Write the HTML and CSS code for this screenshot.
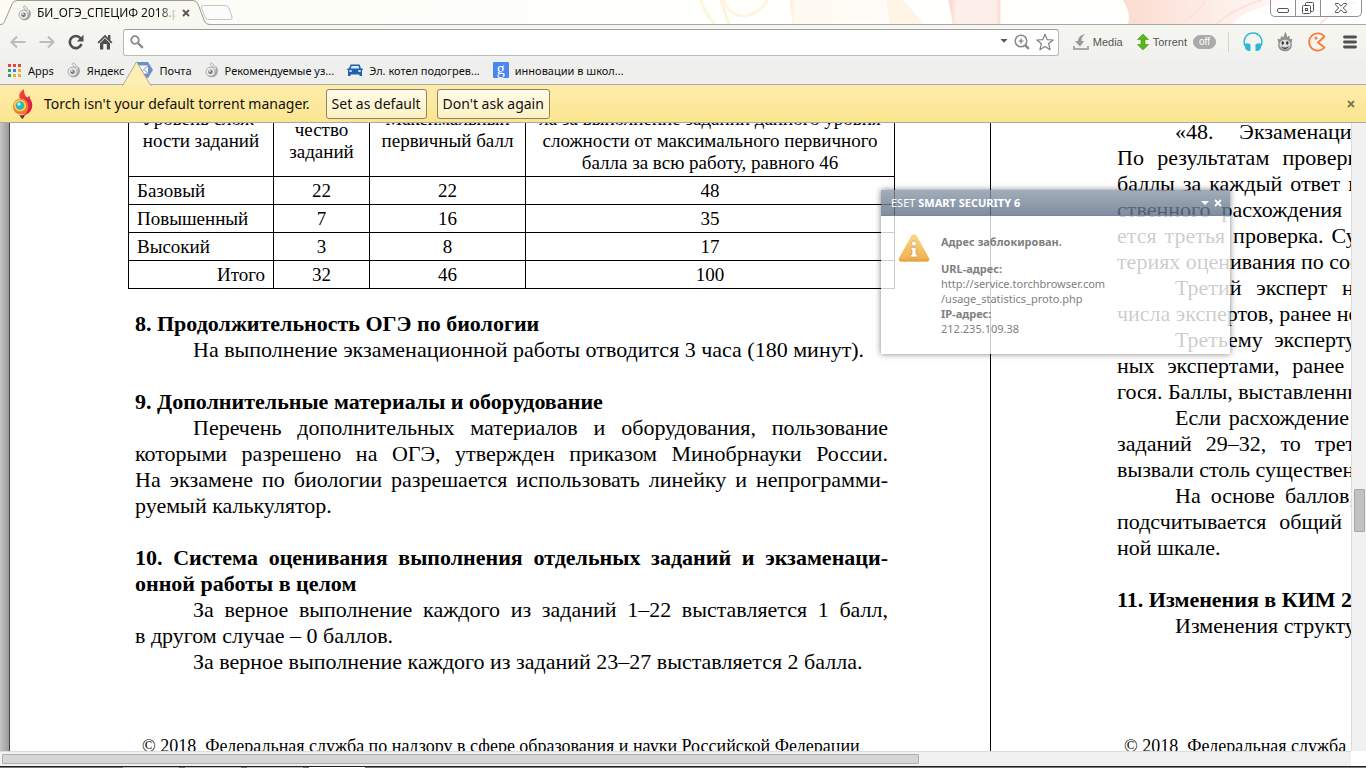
FILE: index.html
```html
<!DOCTYPE html>
<html lang="ru">
<head>
<meta charset="utf-8">
<title>БИ_ОГЭ_СПЕЦИФ 2018.pdf</title>
<link rel="stylesheet" href="styles.css">
</head>
<body>
<svg class="defs" width="0" height="0" aria-hidden="true">
  <defs>
    <linearGradient id="gFlame" x1="0" y1="0" x2="1" y2="1"><stop offset="0" stop-color="#ff4a3c"/><stop offset="1" stop-color="#c81640"/></linearGradient>
    <linearGradient id="gWarn" x1="0" y1="0" x2="0" y2="1"><stop offset="0" stop-color="#fbd880"/><stop offset="1" stop-color="#f1ad4e"/></linearGradient>
    <symbol id="torch" viewBox="0 0 14 16">
      <path d="M6 .8C3.600 3.400 7.500 4 8.800 6c1.600-1.600 0-4.600-2.800-5.200z" fill="#e4e4e4" stroke="#aaa" stroke-width=".8"/>
      <path d="M10.500 3.800c3.300 2.900 3.200 7.400.2 10.200-2.400 2-6.300 1.700-8.400-.4 3.400 1.200 7-.3 7.900-3.400.6-2.200.3-4.200.3-6.400z" fill="#a5a5a5"/>
      <circle cx="5.500" cy="9.700" r="4.500" fill="#f0f0f0" stroke="#a6a6a6"/>
      <circle cx="5.500" cy="9.800" r="2.400" fill="#808080"/>
      <circle cx="4.800" cy="9" r="1.100" fill="#ddd"/>
    </symbol>
  </defs>
</svg>
<div class="browser">
  <header class="tabstrip">
    <svg class="theme" viewBox="0 0 700 25" preserveAspectRatio="none" aria-hidden="true">
      <defs>
        <linearGradient id="t1"><stop offset="0" stop-color="#fdf0d8"/><stop offset=".1" stop-color="#fefaf2"/><stop offset=".8" stop-color="#fffbf5"/><stop offset="1" stop-color="#fffdfa"/></linearGradient>
        <linearGradient id="t2"><stop offset="0" stop-color="#fbd3c4"/><stop offset=".15" stop-color="#fdefea"/><stop offset=".9" stop-color="#fdeeea"/><stop offset="1" stop-color="#fbdcd2"/></linearGradient>
        <linearGradient id="t3"><stop offset="0" stop-color="#fcdcd0"/><stop offset=".5" stop-color="#fdf0ea"/><stop offset="1" stop-color="#fff"/></linearGradient>
      </defs>
      <path d="M32 0q4 14 14 25M55 0c8 22 30 22 44 0M52 0l8 25" fill="none" stroke="#fef5de" stroke-width="3"/>
      <path d="M121 0h62l7 25h-66z" fill="url(#t1)"/>
      <path d="M183 0h50q8 13 24 25h-67z" fill="#fffcf7"/>
      <path d="M218 0h18l20 25h-34z" fill="#fff5e6"/>
      <path d="M281 0h52v25h-48z" fill="url(#t2)"/>
      <path d="M456 0h210q-80 0-100 25h-105q4-10-5-25z" fill="url(#t3)"/>
      <path d="M540 0q-8 12-25 25M596 0q-28 8-46 25M690 2q-20 6-36 23" fill="none" stroke="#fce3da" stroke-width="2"/>
    </svg>
    <div class="tab">
      <svg class="tab-shape" viewBox="0 0 212 25" aria-hidden="true"><path d="M0 24.500c3 0 4-1 5-4L12 4Q13.500.5 17 .5H193q3.500 0 5 3.500l6 16q1.500 4.500 6 4.500v1H0z" fill="#f8f8f1"/><path d="M0 24.500c3 0 4-1 5-4L12 4Q13.500.5 17 .5H193q3.500 0 5 3.500l6 16q1.500 4.500 6 4.500" fill="none" stroke="#9b9b9b"/></svg>
      <svg class="i16" aria-hidden="true"><use href="#torch"/></svg>
      <span class="tab-title">БИ_ОГЭ_СПЕЦИФ 2018.pdf</span>
      <button class="tab-close" aria-label="Закрыть вкладку"><svg width="8" height="8" viewBox="0 0 8 8"><path d="M1 1l6 6M7 1L1 7" stroke="#555" stroke-width="1.800"/></svg></button>
    </div>
    <button class="newtab" aria-label="Новая вкладка"><svg width="34" height="17" viewBox="0 0 34 17"><path d="M3 1.500h22q3 0 4 2.500l3 9q.8 2.500-2 2.500H9q-3 0-4-2.500L1.500 4q-.8-2.500 1.500-2.500z" fill="#fcfcfc" stroke="#c4c4c4"/></svg></button>
    <div class="winctl">
      <button aria-label="Свернуть"><svg width="24" height="16" viewBox="0 0 24 16"><rect x="6.500" y="8.500" width="11" height="4" rx="1.500" fill="#fff" stroke="#555"/></svg></button>
      <button aria-label="Развернуть"><svg width="24" height="16" viewBox="0 0 24 16"><rect x="9.500" y="2.500" width="8" height="9" rx="1" fill="#fff" stroke="#555"/><rect x="6.500" y="5.500" width="8" height="8" rx="1" fill="#fff" stroke="#555"/><rect x="9.500" y="8.500" width="2" height="2" fill="none" stroke="#555"/></svg></button>
      <button class="wide" aria-label="Закрыть"><svg width="40" height="16" viewBox="0 0 40 16"><path d="M14.500 3.500h3l2.500 2.800 2.500-2.800h3v1.200L22.300 8l3.200 3.300v1.200h-3L20 9.700l-2.500 2.800h-3v-1.200L17.700 8l-3.200-3.300z" fill="#fff" stroke="#555"/></svg></button>
    </div>
  </header>

  <div class="toolbar">
    <nav class="nav">
      <button aria-label="Назад"><svg width="16" height="14" viewBox="0 0 16 14"><path d="M7 1.500L1.500 7 7 12.500M2 7h13.500" fill="none" stroke="#bdbdbd" stroke-width="2.200"/></svg></button>
      <button aria-label="Вперёд"><svg width="16" height="14" viewBox="0 0 16 14"><path d="M9 1.500L14.500 7 9 12.500M14 7H.5" fill="none" stroke="#bdbdbd" stroke-width="2.200"/></svg></button>
      <button aria-label="Обновить"><svg width="16" height="16" viewBox="0 0 16 16"><path d="M12.500 4.300A6 6 0 1 0 13.500 10" fill="none" stroke="#4f4f4f" stroke-width="2.600"/><path d="M15.500.8v6.700H8.800z" fill="#4f4f4f"/></svg></button>
      <button aria-label="Домой"><svg width="16" height="16" viewBox="0 0 16 16"><path d="M8 .8L.6 8.200l1.200 1.200L8 3.200l6.200 6.200 1.200-1.200-2-2V1h-2.400v2.800z" fill="#4f4f4f"/><path d="M3 9.200l5-5 5 5V15.500H9.800V10H6.300v5.500H3z" fill="#4f4f4f"/></svg></button>
    </nav>
    <div class="omnibox">
      <svg width="14" height="14" viewBox="0 0 14 14" aria-hidden="true"><circle cx="5" cy="5" r="3.800" fill="none" stroke="#8a8a8a" stroke-width="1.800"/><path d="M7.800 7.800l5 5" stroke="#8a8a8a" stroke-width="2.400"/></svg>
      <input type="text" aria-label="Адресная строка">
      <button aria-label="История"><svg width="8" height="8" viewBox="0 0 8 8"><path d="M.5 1h7L4 4.800z" fill="#555"/></svg></button>
      <button aria-label="Масштаб"><svg width="16" height="16" viewBox="0 0 16 16"><circle cx="7" cy="7" r="5.800" fill="none" stroke="#8a8a8a" stroke-width="1.500"/><path d="M11.200 11.200l3.600 3.600" stroke="#8a8a8a" stroke-width="2.400"/><path d="M7 4.500v5M4.500 7h5" stroke="#777" stroke-width="1.200"/></svg></button>
      <button aria-label="Добавить закладку"><svg width="18" height="18" viewBox="0 0 18 18"><path d="M9 1.200l2.200 5.400 5.900.4-4.500 3.800 1.500 5.900L9 13.500l-5.100 3.200 1.500-5.900L.9 7l5.900-.4z" fill="#fff" stroke="#808080" stroke-width="1.200" stroke-linejoin="round"/></svg></button>
    </div>
    <div class="exts">
      <button class="ext"><svg width="16" height="16" viewBox="0 0 16 16"><path d="M12.500 0C7 1 5 4 5.200 7H2l5 5.500L11.200 7H8.500c-.3-2.500 1-5 4-7z" fill="#999"/><path d="M1 12v3h14v-3" fill="none" stroke="#aaa" stroke-width="2"/></svg><span>Media</span></button>
      <button class="ext torrent"><svg width="12" height="16" viewBox="0 0 12 16"><path d="M6 0l5.500 5.500H8v5h3.500L6 16 .5 10.500H4v-5H.5z" fill="#58b81e" stroke="#3f9412" stroke-width=".6"/></svg><span>Torrent</span><span class="off">off</span></button>
      <span class="sep"></span>
      <button aria-label="Музыка"><svg width="20" height="20" viewBox="0 0 20 20"><path d="M2 14C-.8 7.500 3.500 1 10 1s10.800 6.500 8 13" fill="none" stroke="#2bb9d4" stroke-width="1.500"/><path d="M2 12q2.500-1.500 5.500.5V19q-4 .5-5.500-3zM18 12q-2.500-1.500-5.500.5V19q4 .5 5.500-3z" fill="#2bb9d4"/></svg></button>
      <button aria-label="Hola"><svg width="16" height="20" viewBox="0 0 16 20"><path d="M1 7l2.500 1 1-3.500L6.500 6 8.500.5l1.500 5.500L12 4l.5 4L15 7l-.8 3.500q1.500 8-6.200 8.500-7.700-.5-6.200-8.500z" fill="#929292" stroke="#777" stroke-width=".6"/><ellipse cx="8" cy="12.500" rx="5.500" ry="4.800" fill="#dedede"/><ellipse cx="5.700" cy="11" rx="1.200" ry="1.700" fill="#333"/><ellipse cx="10.300" cy="11" rx="1.200" ry="1.700" fill="#333"/><path d="M4 14q4 3 8 0-1 3-4 3t-4-3z" fill="#444"/></svg></button>
      <button aria-label="Игры"><svg width="20" height="20" viewBox="0 0 20 20"><path d="M17.500 4.500A8.700 8.700 0 1 0 17.500 15.500L11 10.500z" fill="none" stroke="#ff7830" stroke-width="1.800" stroke-linejoin="round"/><circle cx="9" cy="6" r="1.500" fill="#ff7830"/></svg></button>
      <button aria-label="Меню"><svg width="14" height="14" viewBox="0 0 14 14"><path d="M1.500 2h11M1.500 7h11M1.500 12h11" stroke="#505050" stroke-width="2.800" stroke-linecap="round"/></svg></button>
    </div>
  </div>

  <nav class="bookmarks">
    <a href="#"><svg width="14" height="13" viewBox="0 0 14 13"><path d="M0 0h3v3H0zM5 0h3v3H5zM10 0h3v3h-3z" fill="#e8453c"/><path d="M0 5h3v3H0z" fill="#2fa35a"/><path d="M5 5h3v3H5z" fill="#3b7df0"/><path d="M10 5h3v3h-3zM5 10h3v3H5zM10 10h3v3h-3z" fill="#f5ae1c"/><path d="M0 10h3v3H0z" fill="#2fa35a"/></svg>Apps</a>
    <a href="#"><svg class="i16" aria-hidden="true"><use href="#torch"/></svg>Яндекс</a>
    <a href="#" class="mail"><svg width="16" height="16" viewBox="0 0 16 16"><path d="M0 0h11l5 8-5 8H0z" fill="#6f8fc9"/><path d="M0 3.500h11v8H0z" fill="#fff"/><path d="M0 4l5.500 4.500L11 4M0 11.500l4-4M11 11.500l-4-4" fill="none" stroke="#6f8fc9"/></svg>Почта</a>
    <a href="#"><svg class="i16" aria-hidden="true"><use href="#torch"/></svg>Рекомендуемые уз...</a>
    <a href="#"><svg width="16" height="16" viewBox="0 0 16 16"><path d="M3.500 2.500h9l1.500 4h1.800v1.500H15v6h-2.500V12.500h-9V14H1V8H.2V6.500H2z" fill="#1c62ad"/><path d="M4.500 4h7l.8 2.500H3.700z" fill="#dceaf7"/><path d="M2.300 8.300h2.500v1.500H2.300zM11.200 8.300h2.500v1.500h-2.500z" fill="#fff"/></svg>Эл. котел подогрев...</a>
    <a href="#"><span class="gicon">g</span>инновации в школ...</a>
  </nav>

  <div class="infobar">
    <svg class="notch" width="30" height="25" viewBox="0 0 30 25" aria-hidden="true"><path d="M1 25L14.500 1 29 25z" fill="#fdeeb4"/><path d="M0 24.500L1 24 14.500.8 28.500 24l1 .5" fill="none" stroke="#b3aa8c"/></svg>
    <svg width="22" height="30" viewBox="0 0 22 30" aria-hidden="true"><path d="M11.500 0C6 4.500 6.500 8.500 9 11c4 3 5 7 2 14 8-.5 10-6 9-11-.6-3-2.500-4-2.500-7.500l-2 2C12 6.500 12.500 3 11.500 0z" fill="url(#gFlame)"/><circle cx="9" cy="17.500" r="8" fill="#f47a35"/><path d="M12 9.500q7 4.500 3 13.500-3 4-8 3L10.500 30l2-3.500Q21.500 23 19.500 14q-2-4-7.500-4.500z" fill="#dc2342"/><circle cx="8" cy="16.500" r="6" fill="#f7d24d"/><circle cx="8" cy="16.500" r="4.300" fill="#2fb6bd"/><circle cx="7" cy="15" r="1.800" fill="#bdeef0"/><path d="M8 27l5-.5-2.500 3.500z" fill="#6d3436"/></svg>
    <span class="msg">Torch isn't your default torrent manager.</span>
    <button class="btn">Set as default</button>
    <button class="btn">Don't ask again</button>
    <button class="info-close" aria-label="Закрыть"><svg width="8" height="8" viewBox="0 0 8 8"><path d="M1 1l6 6M7 1L1 7" stroke="#7d7658" stroke-width="1.800"/></svg></button>
  </div>

  <main class="viewer">
    <div class="doc">
      <div class="spread">
        <article class="page left">
          <table>
            <colgroup><col class="c1"><col class="c2"><col class="c3"><col class="c4"></colgroup>
            <thead><tr>
              <th>Уровень слож-<br>ности заданий</th><th>Коли-<br>чество<br>заданий</th><th>Максимальный<br>первичный балл</th><th>Процент максимального бал-<br>ла за выполнение заданий данного уровня<br>сложности от максимального первичного<br>балла за всю работу, равного 46</th>
            </tr></thead>
            <tbody>
              <tr><td class="name">Базовый</td><td>22</td><td>22</td><td>48</td></tr>
              <tr><td class="name">Повышенный</td><td>7</td><td>16</td><td>35</td></tr>
              <tr><td class="name">Высокий</td><td>3</td><td>8</td><td>17</td></tr>
              <tr><td class="total">Итого</td><td>32</td><td>46</td><td>100</td></tr>
            </tbody>
          </table>
          <section>
            <h2>8. Продолжительность ОГЭ по биологии</h2>
            <p>На выполнение экзаменационной работы отводится 3 часа (180 минут).</p>
          </section>
          <section>
            <h2>9. Дополнительные материалы и оборудование</h2>
            <p><span class="full">Перечень дополнительных материалов и оборудования, пользование</span><span class="full">которыми разрешено на ОГЭ, утвержден приказом Минобрнауки России.</span><span class="full">На экзамене по биологии разрешается использовать линейку и непрограмми-</span><span class="end">руемый калькулятор.</span></p>
          </section>
          <section>
            <h2><span class="full">10. Система оценивания выполнения отдельных заданий и экзаменаци-</span><span class="end">онной работы в целом</span></h2>
            <p><span class="full">За верное выполнение каждого из заданий 1–22 выставляется 1&nbsp;балл,</span><span class="end">в другом случае – 0 баллов.</span></p>
            <p>За верное выполнение каждого из заданий 23–27 выставляется 2 балла.</p>
          </section>
          <footer>© 2018&nbsp; Федеральная служба по надзору в сфере образования и науки Российской Федерации</footer>
        </article>
        <article class="page right">
          <section>
            <p><span class="full">«48. Экзаменационные работы проверяются двумя экспертами.</span><span class="full">По результатам проверки эксперты независимо друг от друга выставляют</span><span class="full">баллы за каждый ответ на задания экзаменационной работы... В случае суще-</span><span class="full">ственного расхождения в баллах, выставленных двумя экспертами, назнача-</span><span class="full">ется третья проверка. Существенное расхождение в баллах определено в кри-</span><span class="end">териях оценивания по соответствующему учебному предмету.</span></p>
            <p><span class="full">Третий эксперт назначается председателем предметной комиссии из</span><span class="end">числа экспертов, ранее не проверявших экзаменационную работу.</span></p>
            <p><span class="full">Третьему эксперту предоставляется информация о баллах, выставлен-</span><span class="full">ных экспертами, ранее проверявшими экзаменационную работу обучающе-</span><span class="end">гося. Баллы, выставленные третьим экспертом, являются окончательными».</span></p>
            <p><span class="full">Если расхождение составляет 2 и более балла за выполнение любого из</span><span class="full">заданий 29–32, то третий эксперт проверяет ответы на задания, которые</span><span class="end">вызвали столь существенное расхождение.</span></p>
            <p><span class="full">На основе баллов, выставленных за выполнение всех заданий работы,</span><span class="full">подсчитывается общий тестовый балл, который переводится в отметку по</span><span class="end">ной шкале.</span></p>
          </section>
          <section>
            <h2>11. Изменения в КИМ 2018 года в сравнении с КИМ 2017 года</h2>
            <p>Изменения структуры и содержания КИМ отсутствуют.</p>
          </section>
          <footer>© 2018&nbsp; Федеральная служба по надзору в сфере образования и науки Российской Федерации</footer>
        </article>
      </div>
    </div>
    <div class="vbar"><div class="vthumb"></div></div>
    <div class="hbar"><div class="hthumb"></div></div>
    <div class="corner"></div>
  </main>
  <div class="taskbar"><i></i><i></i><i></i><i class="lit"></i></div>
</div>

<aside class="eset">
  <div class="eset-head"><span>ESET <b>SMART SECURITY 6</b></span>
    <span class="eset-ctl"><button aria-label="Меню"><svg width="8" height="8" viewBox="0 0 8 8"><path d="M0 2h8L4 6z" fill="#fff"/></svg></button><button aria-label="Закрыть"><svg width="8" height="8" viewBox="0 0 8 8"><path d="M1 1l6 6M7 1L1 7" stroke="#fff" stroke-width="1.800"/></svg></button></span>
  </div>
  <div class="eset-body">
    <svg width="32" height="28" viewBox="0 0 32 28" aria-hidden="true"><path d="M13.500 1.500q2.500-2.500 5 0L31 24q1 3.500-2 3.500H3Q0 27.500 1 24z" fill="url(#gWarn)"/><path d="M1 25q0 2.500 2 2.500h26q2 0 2-2.500z" fill="#e8a548"/><circle cx="16" cy="9.500" r="2.500" fill="#fff" stroke="#cf9440" stroke-width=".6"/><path d="M13 13.500h5v7h1.500V23h-7v-2.500H14V16h-1z" fill="#fff" stroke="#cf9440" stroke-width=".6"/></svg>
    <div>
      <p class="eset-title"><b>Адрес заблокирован.</b></p>
      <p><b>URL-адрес:</b><br>http://service.torchbrowser.com<br>/usage_statistics_proto.php<br><b>IP-адрес:</b><br>212.235.109.38</p>
    </div>
  </div>
</aside>
</body>
</html>
```
FILE: styles.css
```css
* { box-sizing: border-box; }
body { margin: 0; overflow: hidden; font-family: "Noto Sans", "Open Sans", sans-serif; font-size: 12px; color: #111; }
button { border: 0; padding: 0; background: none; font: inherit; color: inherit; display: flex; align-items: center; justify-content: center; }
svg { display: block; flex: none; }
.defs { position: absolute; }
.i16 { width: 14px; height: 16px; }

.browser { display: flex; flex-direction: column; height: 100vh; }

/* Tab strip */
.tabstrip { position: relative; display: flex; height: 25px; flex: none; background: linear-gradient(90deg, #fcfcf5, #fffffd 60%, #fff); border-bottom: 1px solid #a8a8a8; }
.theme { position: absolute; right: 0; top: 0; width: 51%; height: 24px; }
.tab { position: relative; display: flex; align-items: center; width: 200px; height: 25px; padding-left: 18px; gap: 5px; z-index: 1; }
.tab > * { position: relative; }
.tab > .tab-shape { position: absolute; left: 0; top: 0; width: 212px; height: 25px; }
.tab-title { width: 140px; overflow: hidden; white-space: nowrap; -webkit-mask-image: linear-gradient(90deg, #000 88%, transparent); mask-image: linear-gradient(90deg, #000 88%, transparent); }
.newtab { position: relative; }
.winctl { position: relative; display: flex; margin-left: auto; margin-right: 4px; height: 17px; border: 1px solid #909090; border-top: 0; border-radius: 0 0 5px 5px; background: rgba(255,255,255,.6); }
.winctl button + button { border-left: 1px solid #909090; }

/* Toolbar */
.toolbar { display: flex; align-items: center; flex: none; height: 34px; padding: 0 9px 0 10px; background: linear-gradient(#f7f7f1, #f0f0ee); }
.nav { display: flex; gap: 13px; }
.omnibox { display: flex; align-items: center; flex: 1; height: 27px; margin-left: 10px; padding: 0 4px 0 6px; gap: 6px; background: #fff; border: 1px solid #b8b8b4; border-top-color: #9c9c98; border-radius: 3px; }
.omnibox input { flex: 1; min-width: 0; border: 0; outline: 0; background: transparent; font: inherit; }
.exts { display: flex; align-items: center; padding-left: 14px; color: #555; }
.exts > * + * { margin-left: 14px; }
.exts > :last-child { margin-left: 16px; }
.ext { font: 11px "Liberation Sans", sans-serif; gap: 4px; }
.off { margin-left: 2px; width: 23px; height: 14px; line-height: 12px; border: 1px solid #aaa; border-radius: 7px; background: #aaa; color: #fff; font-size: 10px; text-align: center; }
.exts .sep { width: 1px; height: 20px; margin-left: 12px; background: #d2d2ce; }

/* Bookmarks */
.bookmarks { display: flex; align-items: center; flex: none; height: 25px; padding: 0 8px 3px; gap: 13px; background: #efefed; font-size: 11px; }
.bookmarks a { display: flex; align-items: center; gap: 6px; color: #111; text-decoration: none; white-space: nowrap; }
.gicon { width: 16px; height: 16px; line-height: 14px; border-radius: 1px; background: #4a86f0; color: #fff; font-family: "Liberation Serif", serif; font-size: 16px; text-align: center; }

/* Infobar */
.infobar { position: relative; display: flex; align-items: center; flex: none; height: 39px; padding: 0 11px 0 12px; gap: 10px; border: solid #aaa9a8; border-width: 1px 0; background: linear-gradient(#ffecab, #fae58f); font-size: 14px; }
.notch { position: absolute; left: 122px; top: -24px; }
.msg { margin-right: 6px; }
.btn { height: 30px; padding: 0 5px; border: 1px solid #8f8464; border-radius: 3px; background: linear-gradient(#fffbe9, #fdf1c2); }
.info-close { margin-left: auto; }

/* Viewer */
.viewer { flex: 1; min-height: 0; display: grid; grid-template-columns: 1fr 15px; grid-template-rows: 1fr 15px; }
.doc { overflow: hidden; min-width: 0; background: linear-gradient(90deg, #c4c4c4, #999 9px); padding-left: 9px; }
.spread { display: grid; grid-template-columns: 981px 981px; width: 1963px; height: 100%; border-left: 1px solid #444; background: #fff; color: #000; font-family: "Liberation Serif", serif; font-size: 22px; line-height: 26px; }
.page { height: 628px; white-space: nowrap; display: flex; flex-direction: column; }
.left { border-right: 1px solid #000; padding: 0 102px 0 125px; }
.right { padding: 0 102px 0 126px; }
.right section:first-child { margin-top: -4px; }
.spread h2 { margin: 0; font-size: 22px; line-height: 26px; }
.spread p { margin: 0; text-indent: 58px; }
.spread section + section { margin-top: 26px; }
.full, .end { display: block; }
.full { text-align-last: justify; }
p .full ~ .full, p .end { text-indent: 0; }
.page footer { margin-top: auto; height: 18px; line-height: 26px; padding-left: 7px; font-size: 18px; }

table { border-collapse: collapse; table-layout: fixed; width: 767px; margin: -40px 0 22px -7px; font-size: 19px; line-height: 22px; flex: none; }
.c1 { width: 145px; } .c2 { width: 96px; } .c3 { width: 156px; }
th, td { border: 1px solid #000; padding: 3px 8px 2px; font-weight: 400; text-align: center; vertical-align: middle; }
th { padding: 2px 0; }
td.name { text-align: left; }
td.total { text-align: right; }

.vbar { background: #f1f1f1; border-left: 1px solid #dcdcdc; padding: 366px 1px 0 2px; }
.vthumb { height: 43px; background: #c1c1c1; border: 1px solid #a8a8a8; border-radius: 1px; }
.hbar { background: #f1f1f1; border-top: 1px solid #dcdcdc; padding: 2px 0 0 2px; }
.hthumb { width: 68%; height: 10px; background: #d6d6d6; border: 1px solid #b0b0b0; border-radius: 1px; }
.taskbar { display: flex; gap: 6px; height: 2px; flex: none; padding: 0 0 0 123px; background: #777; border-top: 1px solid #222; }
.taskbar i { width: 56px; height: 1px; background: #bbb; }
.taskbar .lit { background: #fff; }

/* Notification */
.eset { position: absolute; left: 881px; top: 190px; width: 349px; color: #808080; font-size: 11px; line-height: 15px; box-shadow: 0 0 6px rgba(0,0,0,.5); }
.eset-head { display: flex; justify-content: space-between; align-items: center; height: 26px; padding: 0 8px 0 10px; color: #fff; background: linear-gradient(rgba(139,152,167,.8), rgba(95,114,136,.8)); border-bottom: 1px solid #75869a; }
.eset-ctl { display: flex; gap: 5px; }
.eset-body { display: flex; gap: 11px; height: 138px; padding: 18px 17px; background: rgba(255,255,255,.8); }
.eset p { margin: 0; }
.eset .eset-title { margin-bottom: 12px; }
```
